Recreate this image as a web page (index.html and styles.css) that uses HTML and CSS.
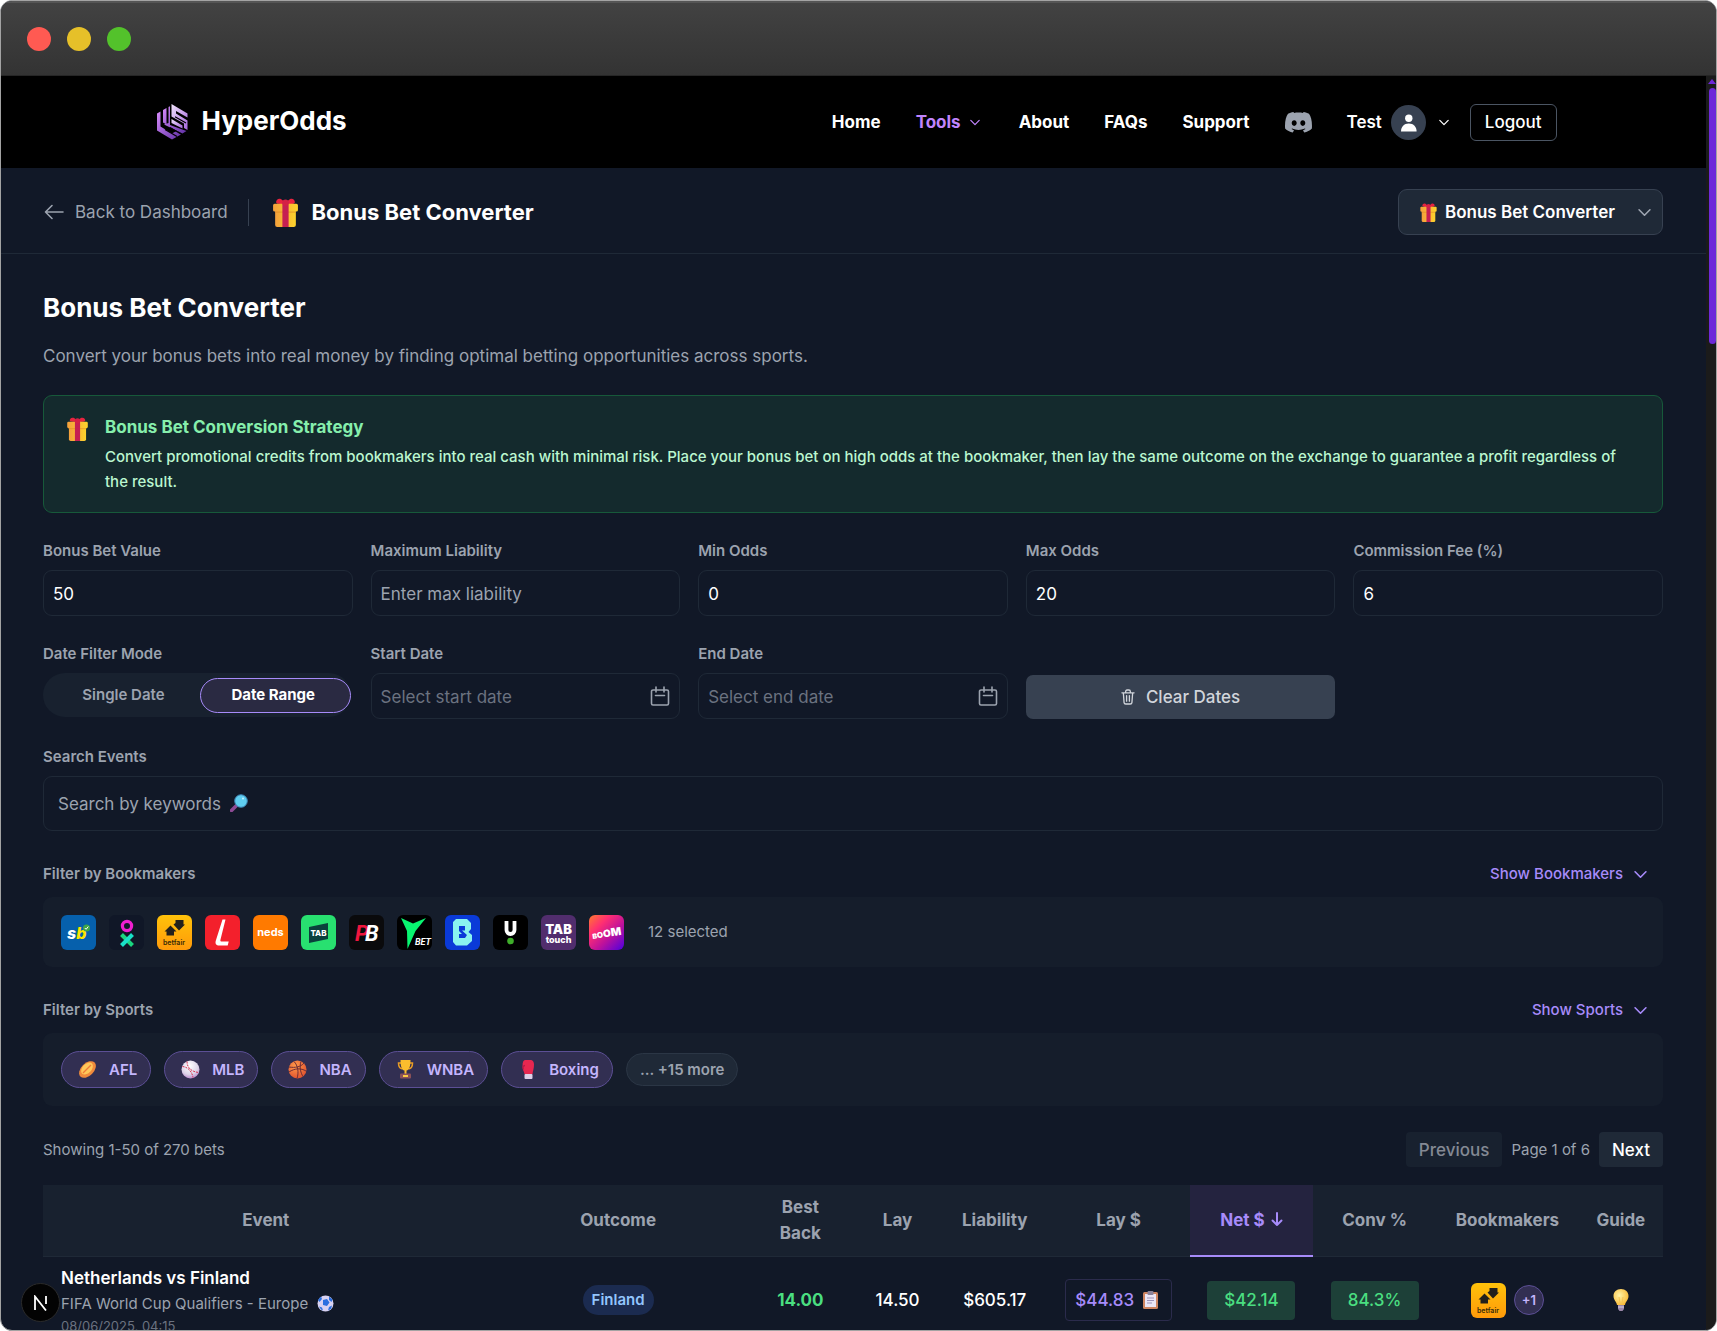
FILE: index.html
```html
<!DOCTYPE html>
<html lang="en">
<head>
<meta charset="utf-8">
<title>HyperOdds - Bonus Bet Converter</title>
<link rel="stylesheet" href="styles.css">
</head>
<body>
<svg class="defs" aria-hidden="true">
  <defs>
    <linearGradient id="gold" x1="0" x2="1"><stop offset="0" stop-color="#f4a03c"/><stop offset="1" stop-color="#fdd32c"/></linearGradient>
    <linearGradient id="logoA" x1="0" y1="0" x2="1" y2="1"><stop offset="0" stop-color="#d68bfb"/><stop offset="1" stop-color="#5f2fa3"/></linearGradient>
    <linearGradient id="logoB" x1="0" y1="0" x2="1" y2="1"><stop offset="0" stop-color="#efe2fb"/><stop offset="1" stop-color="#a566dc"/></linearGradient>
    <linearGradient id="bf" x1="0" y1="0" x2="0" y2="1"><stop offset="0" stop-color="#ffc20a"/><stop offset="1" stop-color="#ff9a0a"/></linearGradient>
    <linearGradient id="boom" x1="0" y1="0" x2="1" y2="1"><stop offset="0" stop-color="#ff7a2f"/><stop offset=".3" stop-color="#ff2f72"/><stop offset=".6" stop-color="#c0129a"/><stop offset="1" stop-color="#4b00e0"/></linearGradient>
    <radialGradient id="ball" cx=".45" cy=".3" r=".8"><stop offset="0" stop-color="#ffffff"/><stop offset=".6" stop-color="#dcd3e8"/><stop offset="1" stop-color="#b06cc4"/></radialGradient>
    <radialGradient id="orange" cx=".4" cy=".3" r=".8"><stop offset="0" stop-color="#ff9a4a"/><stop offset="1" stop-color="#dc4a2c"/></radialGradient>
    <radialGradient id="bulb" cx=".4" cy=".4" r=".7"><stop offset="0" stop-color="#fff3a6"/><stop offset="1" stop-color="#f9b52c"/></radialGradient>
  </defs>
  <symbol id="gift" viewBox="0 0 24 28">
    <path d="M12 6C9 6 4 6 3 4.500C2.500 2 5 0 7.500 1C9.500 2 11 4 12 6ZM12 6c3 0 8 0 9-1.500C21.500 2 19 0 16.500 1 14.500 2 13 4 12 6Z" fill="#e8233f"/>
    <rect x="2" y="11" width="20" height="17" rx="2" fill="url(#gold)"/><rect x="0" y="5.500" width="24" height="7.500" rx="1.500" fill="url(#gold)"/>
    <path d="M2 13h20v1.200H2z" fill="#e08a24" opacity=".6"/><rect x="9" y="4" width="6" height="24" fill="#c61f52"/><circle cx="12" cy="4.500" r="3" fill="#d42045"/>
  </symbol>
  <symbol id="chev" viewBox="0 0 12 8"><path d="M1 1.500 6 6.500l5-5" fill="none" stroke="currentColor" stroke-width="1.500" stroke-linecap="round" stroke-linejoin="round"/></symbol>
  <symbol id="cal" viewBox="0 0 20 20"><path d="M3 4h14a1.500 1.500 0 0 1 1.500 1.500v12A1.500 1.500 0 0 1 17 19H3a1.500 1.500 0 0 1-1.500-1.500v-12A1.500 1.500 0 0 1 3 4ZM6 1v5M14 1v5M5.500 9.500h9" fill="none" stroke="currentColor" stroke-width="1.600" stroke-linecap="round"/></symbol>
  <symbol id="betfair" viewBox="0 0 35 35"><rect width="35" height="35" rx="6" fill="url(#bf)"/><path d="M13.500 10.500 19.500 16.500h-2.500V20.500h-7.500V16.500H7.500ZM22 15.500 28 9.500h-1.500V5H18.500v3L16.500 9.500Z" fill="#22201c"/></symbol>
</svg>

<div class="window">
  <div class="titlebar"><span class="dot dot-red"></span><span class="dot dot-yellow"></span><span class="dot dot-green"></span></div>
  <div class="viewport">
    <div class="page">
      <header class="navbar">
        <div class="nav-inner">
          <a class="brand" href="#">
            <svg width="34" height="36" viewBox="0 0 34 36"><path d="M2 9.500 5.500 7.500V22.500L17 29.500 21.500 27 24.500 29 26 30.500 17 35.500 2 26.500Z" fill="url(#logoA)"/><path d="M8 6 11.500 4V20.500L8 18.500ZM13.500 3 15 2.200V21L31.500 27 27.500 29.500 9 20.500 13.500 19Z" fill="url(#logoA)"/><path d="M16.500 0 32.500 9.500V13.500L21 7V9.500L32.500 16.500V26L29 24V19.500L16.500 12.500Z" fill="url(#logoB)"/><path d="M16.500 15 27.500 21.500V24.500L16.500 19Z" fill="url(#logoB)"/><path d="M10 25.500 22 32.500M15 23.500 26 30M20 12.800 31 19" stroke="#000" stroke-width="1.300"/></svg>
            <span>HyperOdds</span>
          </a>
          <nav class="nav-links">
            <a href="#">Home</a>
            <a href="#" class="nav-active">Tools <svg width="10" height="7"><use href="#chev"/></svg></a>
            <a href="#">About</a>
            <a href="#">FAQs</a>
            <a href="#">Support</a>
            <a href="#" aria-label="Discord"><svg width="27" height="21" viewBox="0 0 27 21"><path fill="#9ca3af" fill-rule="evenodd" d="M9 .9 8.500 0C6.500.3 4.500 1 3 1.800.8 5-.3 9.500.1 16.500 2 18.500 5 20 7.800 20.500L9 18.300l-2.500-1.200.6-.5c4 1.900 8.800 1.900 12.800 0l.6.500-2.500 1.200 1.200 2.200c2.800-.5 5.800-2 7.700-4 .4-7-.7-11.500-2.900-14.700C22.500 1 20.500.3 18.500 0L18 .9C15.500.5 11.500.5 9 .9ZM9.200 8.300c-1.500 0-2.500 1.300-2.500 2.800s1 2.800 2.500 2.800 2.500-1.300 2.500-2.800-1-2.800-2.500-2.800Zm8.600 0c-1.500 0-2.500 1.300-2.500 2.800s1 2.800 2.500 2.800 2.500-1.300 2.500-2.800-1-2.800-2.500-2.800Z"/></svg></a>
          </nav>
          <button class="user" type="button">Test
            <svg width="35" height="35" viewBox="0 0 35 35"><circle cx="17.500" cy="17.500" r="17.500" fill="#374151"/><circle cx="17.800" cy="13.300" r="3.700" fill="#fff"/><path d="M10 26.500c0-4.500 3-8 7.800-8s7.800 3.500 7.800 8Z" fill="#fff"/></svg>
            <svg class="user-chev" width="10" height="7"><use href="#chev"/></svg>
          </button>
          <button class="logout" type="button">Logout</button>
        </div>
      </header>

      <div class="subheader">
        <a class="back" href="#"><svg width="20" height="16" viewBox="0 0 20 16"><path d="M19 8H1.500M8 1.500 1.500 8 8 14.500" fill="none" stroke="currentColor" stroke-width="1.600" stroke-linecap="round" stroke-linejoin="round"/></svg>Back to Dashboard</a>
        <span class="divider"></span>
        <svg width="25" height="29"><use href="#gift"/></svg>
        <h2 class="sub-title">Bonus Bet Converter</h2>
        <div class="tool-select">
          <svg class="tool-gift" width="17" height="19"><use href="#gift"/></svg>
          <select aria-label="Tool"><option>Bonus Bet Converter</option></select>
          <svg class="tool-chev" width="13" height="9"><use href="#chev"/></svg>
        </div>
      </div>

      <main class="content">
        <h1>Bonus Bet Converter</h1>
        <p class="lead">Convert your bonus bets into real money by finding optimal betting opportunities across sports.</p>

        <section class="notice">
          <svg width="21" height="24"><use href="#gift"/></svg>
          <div>
            <h3>Bonus Bet Conversion Strategy</h3>
            <p>Convert promotional credits from bookmakers into real cash with minimal risk. Place your bonus bet on high odds at the bookmaker, then lay the same outcome on the exchange to guarantee a profit regardless of the result.</p>
          </div>
        </section>

        <form class="filters">
          <div class="field"><label for="value">Bonus Bet Value</label><input id="value" type="text" value="50"></div>
          <div class="field"><label for="liability">Maximum Liability</label><input id="liability" type="text" placeholder="Enter max liability"></div>
          <div class="field"><label for="min">Min Odds</label><input id="min" type="text" value="0"></div>
          <div class="field"><label for="max">Max Odds</label><input id="max" type="text" value="20"></div>
          <div class="field"><label for="fee">Commission Fee (%)</label><input id="fee" type="text" value="6"></div>
          <div class="field" role="radiogroup" aria-labelledby="mode">
            <span class="label" id="mode">Date Filter Mode</span>
            <div class="segmented">
              <label><input type="radio" name="mode">Single Date</label>
              <label><input type="radio" name="mode" checked>Date Range</label>
            </div>
          </div>
          <div class="field"><label for="start">Start Date</label><div class="date"><input id="start" type="text" placeholder="Select start date"><svg width="20" height="20"><use href="#cal"/></svg></div></div>
          <div class="field"><label for="end">End Date</label><div class="date"><input id="end" type="text" placeholder="Select end date"><svg width="20" height="20"><use href="#cal"/></svg></div></div>
          <button class="clear" type="button"><svg width="14" height="16" viewBox="0 0 15 17"><path d="M1 4h13M5 4V2.500C5 1.500 5.500 1 6.500 1h2c1 0 1.500.5 1.500 1.500V4M2.500 4l.8 10.500c.1 1 .7 1.500 1.700 1.500h5c1 0 1.600-.5 1.700-1.500L12.500 4M6 7v6M9 7v6" fill="none" stroke="currentColor" stroke-width="1.400" stroke-linecap="round"/></svg>Clear Dates</button>
          <div class="field search">
            <label for="search">Search Events</label>
            <div class="search-box"><input id="search" type="text" placeholder="Search by keywords">
              <svg width="18" height="18" viewBox="0 0 18 18"><path d="M1.500 16.500 6.500 11.500" stroke="#8d4a94" stroke-width="3.600" stroke-linecap="round"/><circle cx="11" cy="7" r="6.300" fill="#5fcdf0" stroke="#3b7fae" stroke-width="1"/><circle cx="13" cy="4.500" r="1" fill="#c9f4ff"/></svg></div>
          </div>
        </form>

        <div class="section-head"><h4>Filter by Bookmakers</h4><button type="button">Show Bookmakers <svg width="13" height="9"><use href="#chev"/></svg></button></div>
        <div class="panel books">
          <svg width="35" height="35" viewBox="0 0 35 35"><rect width="35" height="35" rx="6" fill="#0660ac"/><text x="6" y="24" font-size="16" font-weight="800" font-style="italic" fill="#fff">s<tspan fill="#ffe600">b</tspan></text><circle cx="25.500" cy="13" r="3.500" fill="#3fa648"/><path d="M23.800 13l1.300 1.300 2.200-2.800" fill="none" stroke="#fff"/></svg>
          <svg width="35" height="35" viewBox="0 0 35 35"><rect width="35" height="35" rx="6" fill="#101727"/><circle cx="18" cy="11" r="4.600" fill="none" stroke="#f01fd0" stroke-width="3.200"/><path d="M12.500 19.500l11 11" stroke="#19d67f" stroke-width="4"/><path d="M23.500 19.500l-11 11" stroke="#19e0c8" stroke-width="4"/></svg>
          <svg width="35" height="35"><use href="#betfair"/><text class="bf-name" x="17" y="30">betfair</text></svg>
          <svg width="35" height="35" viewBox="0 0 35 35"><rect width="35" height="35" rx="6" fill="#f3202c"/><path d="M17.500 4.500h3l-5 20c-.4 1.500 0 2 1.200 2h7l-1 4H14c-2.500 0-4-1.500-3.300-4.500Z" fill="#fff"/></svg>
          <svg width="35" height="35" viewBox="0 0 35 35"><rect width="35" height="35" rx="6" fill="#ff7a00"/><text x="17.500" y="21" text-anchor="middle" font-size="11" font-weight="700" fill="#fff">neds</text></svg>
          <svg width="35" height="35" viewBox="0 0 35 35"><rect width="35" height="35" rx="6" fill="#28e070"/><path d="M8 12l19-4v16L8 28Z" fill="#0b3f3c"/><text x="17.500" y="21" text-anchor="middle" font-size="8" font-weight="800" fill="#fff">TAB</text></svg>
          <svg width="35" height="35" viewBox="0 0 35 35"><rect width="35" height="35" rx="6" fill="#0a0a0c"/><g class="condensed" font-size="22" font-weight="700" font-style="italic"><text x="6" y="26" fill="#f0163e">P</text><text x="16" y="26" fill="#fff">B</text></g></svg>
          <svg width="35" height="35" viewBox="0 0 35 35"><rect width="35" height="35" rx="6" fill="#000"/><path d="M4 3l12 5.500L29 3 18.500 16 10.500 34 10 16Z" fill="#08f570"/><text class="condensed" x="18" y="30" font-size="9" font-weight="700" font-style="italic" fill="#fff">BET</text></svg>
          <svg width="35" height="35" viewBox="0 0 35 35"><rect width="35" height="35" rx="6" fill="#0a3ad8"/><path fill="#8af3f0" fill-rule="evenodd" d="M11 4h11l4 4v6l-2.500 3L27 20v6l-5 4.500H11L8 27V7ZM14 11h6v4.500h-3l5 4.500-2 3h-6v-4h3l-3-3Z"/></svg>
          <svg width="35" height="35" viewBox="0 0 35 35"><rect width="35" height="35" rx="6" fill="#000"/><path d="M13.500 6v9a4 4 0 0 0 8 0V6" fill="none" stroke="#fff" stroke-width="3.800"/><circle cx="17.500" cy="26" r="3.300" fill="#3fae2a"/></svg>
          <svg width="35" height="35" viewBox="0 0 35 35"><rect width="35" height="35" rx="6" fill="#512d6d"/><text x="17.500" y="19" text-anchor="middle" font-size="13" font-weight="900" fill="#fff">TAB</text><text x="17.500" y="27.500" text-anchor="middle" font-size="9" font-weight="800" fill="#fff">touch</text></svg>
          <svg width="35" height="35" viewBox="0 0 35 35"><rect width="35" height="35" rx="6" fill="url(#boom)"/><text x="3" y="22" font-size="7" font-weight="900" fill="#fff" transform="rotate(-8 17 18)">B<tspan font-size="8">O</tspan><tspan font-size="10">O</tspan><tspan font-size="11">M</tspan></text></svg>
          <span>12 selected</span>
        </div>

        <div class="section-head"><h4>Filter by Sports</h4><button type="button">Show Sports <svg width="13" height="9"><use href="#chev"/></svg></button></div>
        <div class="panel sports">
          <button class="pill" type="button"><svg width="19" height="19" viewBox="0 0 19 19"><ellipse cx="9.500" cy="9.500" rx="10" ry="6.300" transform="rotate(-45 9.500 9.500)" fill="#f08a3c"/><ellipse cx="9" cy="8.500" rx="7" ry="4.500" transform="rotate(-45 9 8.500)" fill="#ffc85a"/><path d="M5 13 13 5" stroke="#f07a38" stroke-width="1.300"/></svg>AFL</button>
          <button class="pill" type="button"><svg width="19" height="19" viewBox="0 0 19 19"><circle cx="9.500" cy="9.500" r="9" fill="url(#ball)"/><path d="M6 1.500c0 6 4 10 11.500 11M1.500 6.500C7 7 11 11.500 12 17.500" fill="none" stroke="#d4304e" stroke-width="1" stroke-dasharray="2 1"/></svg>MLB</button>
          <button class="pill" type="button"><svg width="19" height="19" viewBox="0 0 19 19"><circle cx="9.500" cy="9.500" r="9" fill="url(#orange)"/><path d="M6 1.500c4 4 5 11 3 17M1 7c6 1 12 0 15-4M1 12c6-4 12-4 17-1M13 1.500c-2 6 0 12 2 15" fill="none" stroke="#6d2c35" stroke-width="1"/></svg>NBA</button>
          <button class="pill" type="button"><svg width="19" height="19" viewBox="0 0 19 19"><path d="M5 3H2.500c0 4 1 5.500 4 6M14 3h2.500c0 4-1 5.500-4 6" fill="none" stroke="#e89c24" stroke-width="1.500"/><path d="M4.500 0h10c0 6-1 10-4 10.500V14h-2v-3.500C5.500 10 4.500 6 4.500 0Z" fill="#fbbd2d"/><rect x="4" y="13.500" width="11" height="5" rx="1" fill="#8b5158"/><rect x="7" y="15" width="5" height="2" fill="#fbc942"/></svg>WNBA</button>
          <button class="pill" type="button"><svg width="19" height="19" viewBox="0 0 19 19"><path d="M7 0h5c3 0 4 2 4 4.500 0 4-1 6-1.500 9.500H6.500c-.5-3-2-4-2-8C4.500 2 5.500 0 7 0Z" fill="#e72750"/><path d="M7 5.500c-2 0-2.500 2-1.500 4" fill="none" stroke="#b81847" stroke-width="1.300"/><rect x="6.500" y="14" width="8" height="5" rx="1" fill="#ddd0e8"/></svg>Boxing</button>
          <span class="more">... +15 more</span>
        </div>

        <div class="pager">
          <span class="count">Showing 1-50 of 270 bets</span>
          <button type="button" disabled>Previous</button>
          <span>Page 1 of 6</span>
          <button type="button">Next</button>
        </div>

        <table class="bets">
          <colgroup><col class="c-event"><col class="c-outcome"><col class="c-back"><col class="c-lay"><col class="c-liab"><col class="c-stake"><col class="c-net"><col class="c-conv"><col class="c-books"><col class="c-guide"></colgroup>
          <thead><tr><th>Event</th><th>Outcome</th><th>Best Back</th><th>Lay</th><th>Liability</th><th>Lay $</th><th class="sorted">Net $ <svg width="12" height="15" viewBox="0 0 12 15"><path d="M6 1v12M1.500 8.500 6 13l4.500-4.500" fill="none" stroke="currentColor" stroke-width="2" stroke-linecap="round" stroke-linejoin="round"/></svg></th><th>Conv %</th><th>Bookmakers</th><th>Guide</th></tr></thead>
          <tbody><tr>
            <td class="event"><strong>Netherlands vs Finland</strong><span class="league">FIFA World Cup Qualifiers - Europe <svg width="17" height="17" viewBox="0 0 17 17"><circle cx="8.500" cy="8.500" r="8" fill="#d8d2f2"/><path d="M6 5l4-1 2.500 3.500L10 11 6 10ZM1 5l3-3.500L5 4 2.500 7ZM12 1.500l3.500 3-1 2.500L12 5ZM12 12l3-1.500-1 3.500-3 1.500ZM2 11.500l3 1 1 3-2-1Z" fill="#2b6fe0"/></svg></span><span class="when">08/06/2025, 04:15</span></td>
            <td><span class="tag">Finland</span></td>
            <td class="back-odds">14.00</td>
            <td>14.50</td>
            <td>$605.17</td>
            <td><button class="copy" type="button">$44.83 <svg width="15" height="18" viewBox="0 0 15 18"><rect x="0" y="1" width="15" height="17" rx="1.500" fill="#cf8560"/><path d="M2 3h11v13H2z" fill="#ece7f6"/><rect x="4.500" y="0" width="6" height="4" rx="1" fill="#8a8299"/><path d="M4 7h7M4 9.500h7M4 12h5" stroke="#9d93b8" stroke-width="1"/></svg></button></td>
            <td><span class="gain">$42.14</span></td>
            <td><span class="gain">84.3%</span></td>
            <td><div class="row-books"><svg width="35" height="35"><use href="#betfair"/><text class="bf-name" x="17" y="30">betfair</text></svg><span class="plus">+1</span></div></td>
            <td><svg class="bulb" width="16" height="22" viewBox="0 0 16 22"><path d="M8 0c4.500 0 7.500 3 7.500 7 0 4-3 5.500-3.500 9H4C3.500 12.500.5 11 .5 7c0-4 3-7 7.500-7Z" fill="url(#bulb)"/><path d="M6 8l1 7M10 8l-1 7" stroke="#f7c550"/><path d="M5 16h6v4l-1.500 2h-3L5 20Z" fill="#9a86a8"/><path d="M5 18h6" stroke="#d9cfe2"/></svg></td>
          </tr></tbody>
        </table>
      </main>
    </div>
    <div class="scrollbar"><span class="arrow"></span><span class="thumb"></span></div>
    <button class="dev-badge" type="button" aria-label="Dev tools"><svg width="16" height="16" viewBox="0 0 16 16"><path d="M2 15V1.500L13 15.500M13 1v8" fill="none" stroke="#fff" stroke-width="1.800"/></svg></button>
  </div>
</div>
</body>
</html>
```
FILE: styles.css
```css
* { box-sizing: border-box; }
body { margin: 0; background: #fff; color: #fff; font-family: Inter, "Liberation Sans", sans-serif; font-size: 17px; line-height: 26px; }
h1, h2, h3, h4, p { margin: 0; }
button, input, select { font: inherit; color: inherit; margin: 0; }
button { cursor: pointer; border: 0; background: none; padding: 0; }
a { color: inherit; text-decoration: none; }
svg { display: block; flex: none; }
.defs { position: absolute; width: 0; height: 0; }
.condensed { font-family: "Liberation Sans Narrow", Roboto, sans-serif; }
.bf-name { font-size: 7px; font-weight: 600; fill: #3a2a08; text-anchor: middle; }

.window { height: 100vh; display: flex; flex-direction: column; overflow: hidden; background: #111827; border: 1px solid #a3a3a3; border-radius: 12px; }
.titlebar { flex: none; height: 75px; padding: 0 26px; display: flex; align-items: center; gap: 16px; background: linear-gradient(#424242, #333); border-top: 2px solid #555; border-bottom: 1px solid #262626; }
.dot { width: 24px; height: 24px; border-radius: 50%; }
.dot-red { background: #ff5a52; }
.dot-yellow { background: #e6c029; }
.dot-green { background: #53c22b; }
.viewport { flex: 1; min-height: 0; display: flex; position: relative; }
.page { flex: 1; min-width: 0; overflow: hidden; }

.scrollbar { width: 10px; background: #1b1b1b; display: flex; flex-direction: column; align-items: flex-end; padding: 3px 0; gap: 4px; }
.arrow { border: 4px solid transparent; border-top: 0; border-bottom: 5px solid #6d28d9; }
.thumb { width: 7px; height: 20.5%; border-radius: 4px; background: #6d28d9; }

.navbar { height: 92px; background: #000; display: flex; justify-content: center; }
.nav-inner { width: 100%; max-width: 1406px; padding-left: 4px; display: flex; align-items: center; font-weight: 600; }
.brand { display: flex; align-items: center; gap: 13px; margin-right: auto; font-size: 26px; font-weight: 700; }
.brand span { padding-bottom: 3px; }
.nav-links { display: flex; align-items: center; gap: 35px; font-weight: 700; }
.nav-links a { display: flex; align-items: center; gap: 9px; }
.nav-links .nav-active { color: #c084fc; margin-right: 4px; }
.user { display: flex; align-items: center; gap: 9px; margin: 0 21px 0 35px; }
.user-chev { margin-left: 4px; }
.logout { height: 37px; padding: 0 14px; border: 1px solid #4b5563; border-radius: 6px; font-weight: 500; }

.subheader { height: 86px; padding: 3px 43px 0; display: flex; align-items: center; border-bottom: 1px solid #1f2937; }
.back { display: flex; align-items: center; gap: 11px; color: #9ca3af; }
.divider { width: 1px; height: 27px; background: #374151; margin: 0 24px 0 20px; }
.sub-title { font-size: 22px; font-weight: 700; margin-left: 14px; }
.tool-select { margin-left: auto; position: relative; }
.tool-select select { appearance: none; width: 265px; height: 46px; padding: 0 38px 0 46px; background: #1f2937; border: 1px solid #374151; border-radius: 9px; font-weight: 600; }
.tool-gift { position: absolute; left: 22px; top: 14px; }
.tool-chev { position: absolute; right: 12px; top: 19px; color: #9ca3af; }

.content { padding: 38px 43px 0 42px; }
h1 { font-size: 26px; line-height: 32px; }
.lead { margin-top: 18px; line-height: 28px; color: #9ca3af; }
.notice { margin-top: 25px; padding: 18px 40px 18px 23px; display: flex; gap: 17px; background: #142a2d; border: 1px solid #17593a; border-radius: 9px; }
.notice > svg { margin-top: 3px; }
.notice h3 { font-size: 17px; line-height: 27px; font-weight: 700; color: #86efac; }
.notice p { margin-top: 3px; font-size: 15px; line-height: 25px; font-weight: 500; color: #bbf7d0; }

.filters { margin-top: 26px; display: grid; grid-template-columns: repeat(5, 1fr); gap: 26px 18px; }
.field { min-width: 0; }
.field > label, .label { display: block; margin-bottom: 7px; font-size: 15px; line-height: 24px; font-weight: 600; color: #9ca3af; }
.field input[type=text] { display: block; width: 100%; height: 46px; padding: 1px 9px 0; background: #111827; border: 1px solid #1f2937; border-radius: 9px; outline: 0; }
::placeholder { color: #9ca3af; opacity: 1; }
.date { position: relative; color: #9ca3af; }
.date ::placeholder { color: #6b7280; }
.date svg { position: absolute; right: 10px; top: 13px; }
.segmented { height: 44px; margin-right: 2px; display: flex; align-items: center; background: #18212f; border-radius: 22px; font-size: 15px; font-weight: 600; color: #9ca3af; }
.segmented label { flex: 1; height: 35px; display: flex; align-items: center; justify-content: center; border: 1px solid transparent; border-radius: 18px; position: relative; }
.segmented label:first-child { padding-left: 4px; }
.segmented label:has(:checked) { flex: none; width: 49%; padding-right: 4px; background: #2a2a42; border-color: #a78bfa; color: #fff; font-weight: 700; }
.segmented input { position: absolute; opacity: 0; }
.clear { align-self: end; height: 44px; display: flex; align-items: center; justify-content: center; gap: 11px; background: #374151; color: #d1d5db; border-radius: 7px; font-weight: 500; }
.search { grid-column: 1 / -1; }
.search-box { position: relative; }
.search .search-box input { height: 55px; padding: 0 14px; }
.search-box svg { position: absolute; left: 187px; top: 18px; }

.section-head { margin-top: 31px; display: flex; justify-content: space-between; font-size: 15px; line-height: 24px; font-weight: 600; color: #9ca3af; padding-right: 16px; }
.section-head h4 { font: inherit; }
.section-head button { display: flex; align-items: center; gap: 11px; color: #a78bfa; font-weight: 500; }
.panel { margin-top: 11px; padding: 0 18px; display: flex; align-items: center; gap: 13px; background: #151d2b; border-radius: 9px; font-size: 15px; color: #9ca3af; }
.books { height: 70px; }
.books span { margin-left: 11px; }
.sports { height: 73px; }
.pill { height: 37px; padding: 0 13px 0 16px; display: flex; align-items: center; gap: 12px; background: #322f52; border: 1px solid #5c4f95; border-radius: 19px; color: #c4b5fd; font-weight: 600; }
.more { height: 33px; padding: 0 13px; display: flex; align-items: center; background: #1f2937; border: 1px solid #2b3645; border-radius: 17px; font-weight: 600; }

.pager { margin-top: 26px; display: flex; align-items: center; gap: 9px; font-size: 15px; color: #9ca3af; }
.count { margin-right: auto; }
.pager button { height: 35px; padding: 0 13px; background: #1f2937; border-radius: 4px; font-size: 17px; font-weight: 500; color: #fff; }
.pager button:disabled { background: #18212f; color: #848994; }

.bets { width: 100%; margin-top: 18px; border-collapse: collapse; table-layout: fixed; }
.c-event { width: 27.5%; } .c-outcome { width: 16%; } .c-back { width: 6.5%; } .c-lay { width: 5.5%; } .c-liab { width: 6.5%; }
.c-stake { width: 8.8%; } .c-net { width: 7.6%; } .c-conv { width: 7.6%; } .c-books { width: 8.8%; } .c-guide { width: 5.2%; }
.bets th { height: 71px; padding: 0; background: #18212f; border-bottom: 1px solid #1f2937; color: #9ca3af; font-weight: 700; }
.bets th:nth-child(3) { padding: 0 16px; }
.bets th.sorted { background: #24233f; border-bottom: 2px solid #a78bfa; color: #a78bfa; }
.sorted svg { display: inline-block; margin-left: 2px; vertical-align: -1px; }
.bets td { padding: 8px 0 8px; text-align: center; vertical-align: middle; font-weight: 500; }
.bets .event { padding-left: 18px; text-align: left; }
.event strong { display: block; font-weight: 600; }
.league { display: flex; align-items: center; gap: 9px; margin-top: 1px; line-height: 24px; font-size: 15px; font-weight: 400; color: #9ca3af; }
.when { display: block; line-height: 20px; font-size: 13px; font-weight: 400; color: #6b7280; }
.tag { display: inline-block; padding: 0 9px; line-height: 30px; border-radius: 15px; background: #1b2b50; color: #93c5fd; font-size: 15px; font-weight: 600; }
.bets .back-odds { color: #4ade80; font-weight: 700; }
.copy { display: inline-flex; align-items: center; gap: 9px; height: 42px; padding: 0 13px 0 9px; border: 1px solid #2b2b4c; border-radius: 4px; color: #a78bfa; }
.gain { display: inline-block; min-width: 88px; line-height: 39px; border-radius: 4px; background: #1d4038; color: #4ade80; }
.row-books { display: flex; align-items: center; justify-content: center; gap: 8px; }
.plus { width: 30px; height: 30px; line-height: 28px; border: 1px solid #5c4f95; border-radius: 50%; background: #322f52; color: #c4b5fd; font-size: 13px; font-weight: 600; }
.bulb { margin: 0 auto; }

.dev-badge { position: absolute; left: 20px; bottom: 8px; width: 39px; height: 39px; border-radius: 50%; background: #030303; border: 1px solid #2b2b2b; display: flex; align-items: center; justify-content: center; }
```
